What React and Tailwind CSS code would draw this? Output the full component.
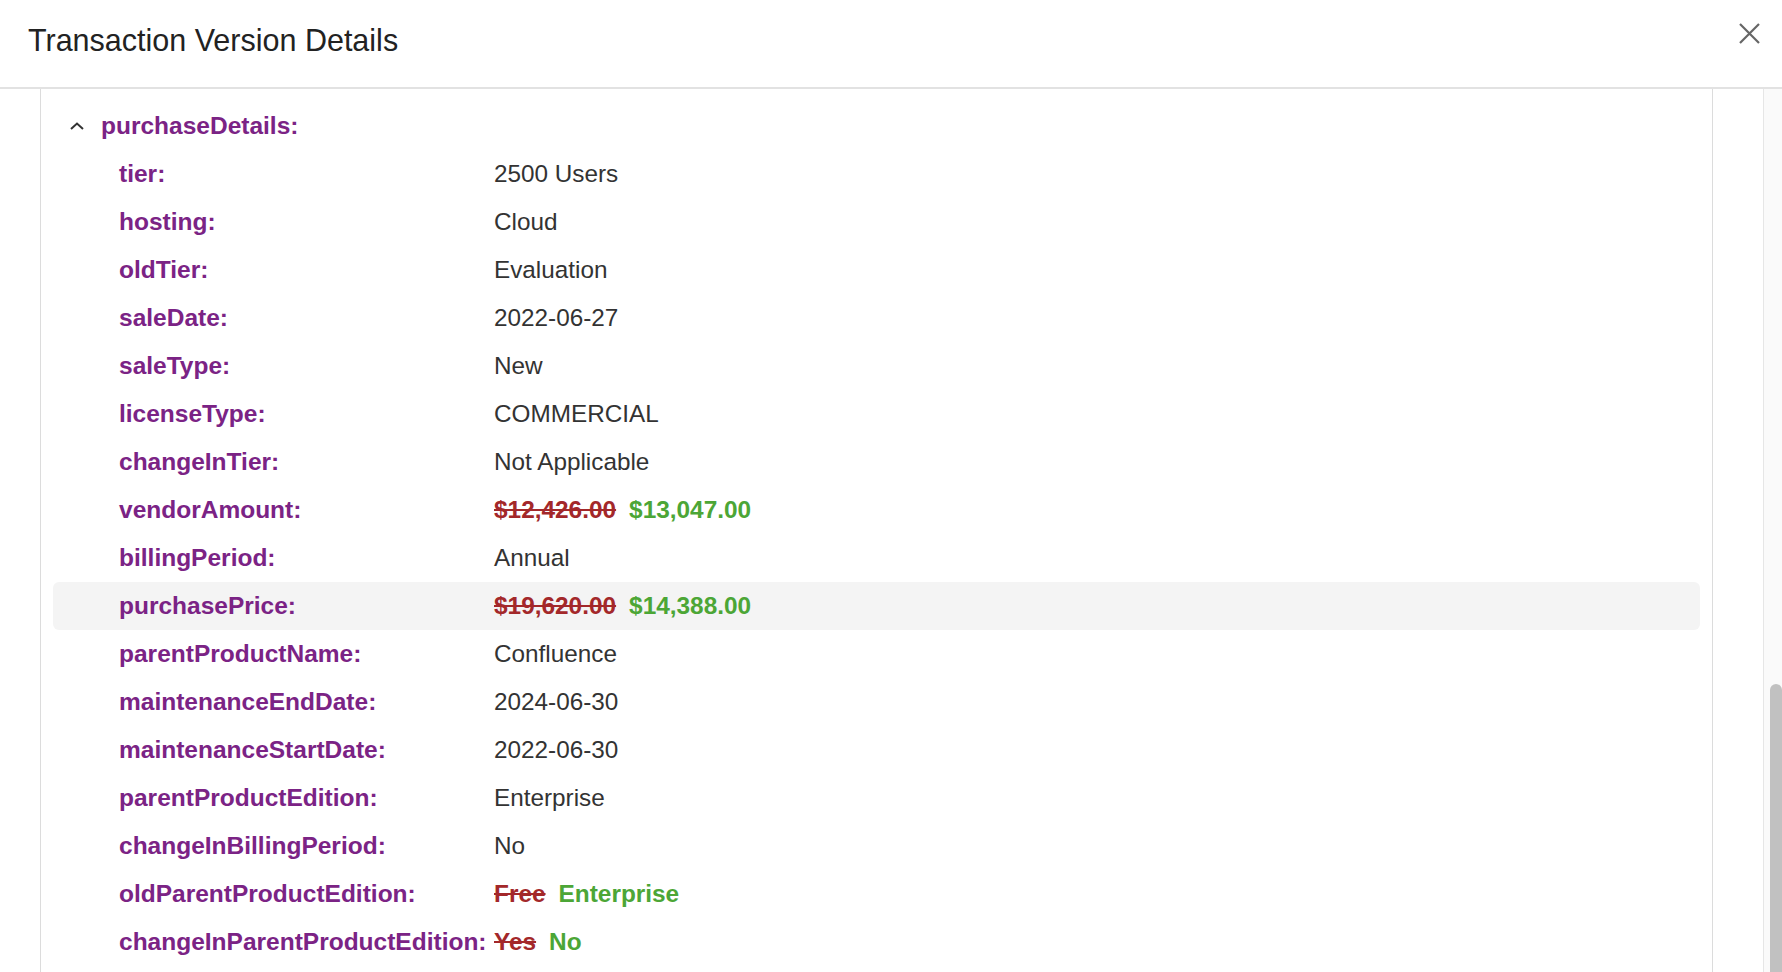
const rows = [
  { label: "tier:", value: "2500 Users" },
  { label: "hosting:", value: "Cloud" },
  { label: "oldTier:", value: "Evaluation" },
  { label: "saleDate:", value: "2022-06-27" },
  { label: "saleType:", value: "New" },
  { label: "licenseType:", value: "COMMERCIAL" },
  { label: "changeInTier:", value: "Not Applicable" },
  { label: "vendorAmount:", old: "$12,426.00", value: "$13,047.00" },
  { label: "billingPeriod:", value: "Annual" },
  { label: "purchasePrice:", old: "$19,620.00", value: "$14,388.00", active: true },
  { label: "parentProductName:", value: "Confluence" },
  { label: "maintenanceEndDate:", value: "2024-06-30" },
  { label: "maintenanceStartDate:", value: "2022-06-30" },
  { label: "parentProductEdition:", value: "Enterprise" },
  { label: "changeInBillingPeriod:", value: "No" },
  { label: "oldParentProductEdition:", old: "Free", value: "Enterprise" },
  { label: "changeInParentProductEdition:", old: "Yes", value: "No" }
];

function Row({ row }) {
  return (
    <div
      className={
        "flex h-[48px] shrink-0 items-center rounded-[6px] " +
        (row.active ? "bg-[#f4f4f4]" : "")
      }
    >
      <div className="w-[441px] shrink-0 pl-[66px] text-[24.5px] font-bold text-[#7b2385]">
        {row.label}
      </div>
      {row.old ? (
        <div className="flex items-center gap-[13px] text-[24.4px] font-bold">
          <span className="text-[#a3282a] line-through">{row.old}</span>
          <span className="text-[#4ca636]">{row.value}</span>
        </div>
      ) : (
        <div className="text-[24.3px] text-[#333333]">{row.value}</div>
      )}
    </div>
  );
}

export default function App() {
  return (
    <div className="flex h-screen w-full flex-col overflow-hidden bg-white font-['Liberation_Sans',Arial,sans-serif]">
      <div className="flex h-[89px] shrink-0 items-start justify-between border-b-2 border-[#e2e2e2] pl-[28px] pr-[22px]">
        <h2 className="pt-[25px] text-[30.5px] leading-none text-[#222222]">
          Transaction Version Details
        </h2>
        <button type="button" className="mt-[23px] text-[#666666]">
          <svg width="21" height="21" viewBox="0 0 21 21" fill="none" stroke="currentColor" strokeWidth="2.2">
            <path d="M1 1L20 20M20 1L1 20" />
          </svg>
        </button>
      </div>
      <div className="flex min-h-0 flex-1">
        <div className="min-w-0 flex-1 pl-[40px] pr-[50px]">
          <div className="flex h-full flex-col border-x border-[#dcdcdc] px-[12px] pt-[13px]">
            <div className="flex h-[48px] shrink-0 items-center pl-[17px]">
              <svg width="14" height="8" viewBox="0 0 14 8" fill="none" stroke="#333333" strokeWidth="2">
                <polyline points="1,7 7,1.5 13,7" />
              </svg>
              <span className="ml-[17px] text-[24.5px] font-bold text-[#7b2385]">purchaseDetails:</span>
            </div>
            {rows.map((row) => (
              <Row key={row.label} row={row} />
            ))}
          </div>
        </div>
        <div className="relative w-[19px] shrink-0 border-l border-[#e6e6e6] bg-[#fafafa]">
          <div className="absolute left-[6px] top-[595px] h-[400px] w-[12px] rounded-full bg-[#c1c1c1]" />
        </div>
      </div>
    </div>
  );
}
